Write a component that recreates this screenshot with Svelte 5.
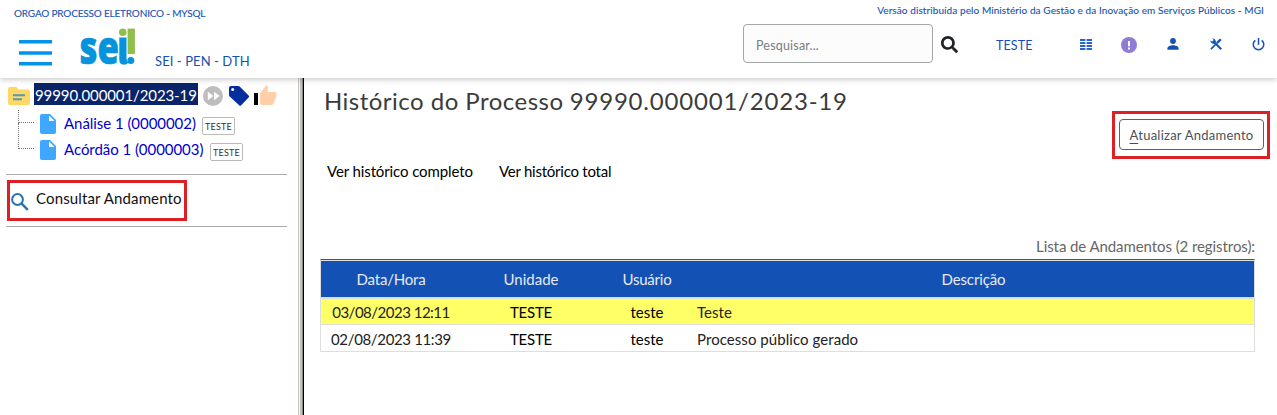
<script>
  const documents = [
    { name: 'Análise 1 (0000002)', unit: 'TESTE', width: 133 },
    { name: 'Acórdão 1 (0000003)', unit: 'TESTE', width: 141 }
  ];
  const rows = [
    { date: '03/08/2023 12:11', spacing: -0.5, unit: 'TESTE', user: 'teste', text: 'Teste', current: true },
    { date: '02/08/2023 11:39', spacing: -0.35, unit: 'TESTE', user: 'teste', text: 'Processo público gerado', current: false }
  ];
</script>

<div class="page">
  <header>
    <div class="brand">
      <div class="org">ORGAO PROCESSO ELETRONICO - MYSQL</div>
      <div class="brand-row">
        <svg class="menu" width="33" height="26" viewBox="0 0 33 26">
          <path d="M0 1.7h33M0 13h33M0 23.8h33" stroke="#0394e8" stroke-width="3.4" />
        </svg>
        <svg class="logo" width="56" height="38" viewBox="0 0 56 38">
          <text x="-0.5" y="35.800" font-family="Open Sans" font-weight="800" font-size="46" textLength="39.500" lengthAdjust="spacingAndGlyphs" fill="#0594dc" stroke="#0594dc" stroke-width="0.700">se</text>
          <path d="M39.3 9.5h7.2v20.8q0 2.6 1.8 4.5-1.5 2-4.4 2-4.6 0-4.6-5.2z" fill="#0594dc" />
          <circle cx="42.8" cy="4.3" r="3.8" fill="#8fbe4b" />
          <path d="M47.6.6h7.3v25.4h-7.3z" fill="#8fbe4b" />
          <circle cx="50.8" cy="32.4" r="3.5" fill="#0594dc" />
        </svg>
        <span class="system">SEI - PEN - DTH</span>
      </div>
    </div>
    <div class="tools">
      <div class="version">Versão distribuída pelo Ministério da Gestão e da Inovação em Serviços Públicos - MGI</div>
      <div class="tool-row">
        <div class="search">Pesquisar...</div>
        <svg class="lens" width="17" height="17" viewBox="0 0 512 512">
          <path fill="#1f2326" d="M505 442.700 405.300 343c-4.500-4.500-10.600-7-17-7H372c27.600-35.300 44-79.700 44-128C416 93.100 322.900 0 208 0S0 93.100 0 208s93.100 208 208 208c48.300 0 92.700-16.400 128-44v16.300c0 6.400 2.500 12.500 7 17l99.700 99.700c9.400 9.400 24.600 9.400 33.900 0l28.300-28.300c9.400-9.400 9.400-24.600.1-34zM208 336c-70.700 0-128-57.200-128-128 0-70.700 57.200-128 128-128 70.700 0 128 57.200 128 128 0 70.700-57.200 128-128 128z" />
        </svg>
        <span class="unit">TESTE</span>
        <svg class="grid-icon" width="12" height="11" viewBox="0 0 12 11">
          <path d="M0 1h5.400M6.600 1H12M0 4h5.400M6.600 4H12M0 7h5.400M6.600 7H12M0 10h5.400M6.600 10H12" stroke="#2a66c9" stroke-width="1.900" />
        </svg>
        <svg class="alert" width="16" height="16" viewBox="0 0 16 16">
          <circle cx="8" cy="8" r="8" fill="#8f7bd3" />
          <path d="M7 4h2v5.200H7zM7 10.400h2v2H7z" fill="#fff" />
        </svg>
        <svg class="user" width="12" height="12" viewBox="0 0 12 12">
          <circle cx="6" cy="3" r="2.900" fill="#1351b4" />
          <path d="M.4 11.800v-1.300C.4 8.500 3.500 7.300 6 7.300s5.600 1.200 5.600 3.200v1.300z" fill="#1351b4" />
        </svg>
        <svg class="wrench" width="12" height="12" viewBox="0 0 12 12">
          <path d="M3.300 3.300 11.200 11.200" stroke="#1351b4" stroke-width="2" />
          <path d="M2.200.5A3 3 0 0 1 5.600 4.400L4.400 5.600A3 3 0 0 1 .5 2.200L2.100 3.700 3.700 2.100z" fill="#1351b4" />
          <path d="M6.900 5.100 10.800 1.200" stroke="#1351b4" stroke-width="2.300" />
          <path d="M6 6 .9 11.100" stroke="#1351b4" stroke-width="1.700" />
        </svg>
        <svg class="power" width="13" height="13" viewBox="0 0 13 13">
          <path d="M6.500 0v6.800M3.300 2.300a5.300 5.300 0 1 0 6.400 0" fill="none" stroke="#1351b4" stroke-width="1.500" />
        </svg>
      </div>
    </div>
  </header>

  <div class="body">
    <aside>
      <div class="process">
        <svg width="22" height="18" viewBox="0 0 22 18">
          <path d="M2 0h6.500l2.200 2.500H20a2 2 0 0 1 2 2V16a2 2 0 0 1-2 2H2a2 2 0 0 1-2-2V2a2 2 0 0 1 2-2z" fill="#ffd764" />
          <path d="M5 8.300h12M5 12.200h9" stroke="#4d9cc0" stroke-width="2" />
        </svg>
        <span class="number">99990.000001/2023-19</span>
        <svg class="forward" width="20" height="20" viewBox="0 0 20 20">
          <circle cx="10" cy="10" r="10" fill="#bdbdbd" />
          <path d="M4.800 5.800v8.400l5.600-4.200zM11 5.800v8.400l5.700-4.200z" fill="#fff" />
        </svg>
        <svg class="tag" width="21" height="20" viewBox="0 0 21 20">
          <path d="M0 2a2 2 0 0 1 2-2h7.200q.8 0 1.400.6l9 8.900q1 1 0 2l-7.400 7.800q-1 1-2 0L.7 10.500Q0 9.800 0 9z" fill="#022e9f" />
          <circle cx="3.700" cy="3.500" r="1.500" fill="#fff" />
        </svg>
        <svg class="thumb" width="23" height="21" viewBox="0 0 23 21">
          <path d="M0 8h4v12H0z" fill="#000" />
          <path d="M6 8.200 12.500 0l1.200 1.200q.5.500.4 1.300L13.300 7H20.500q2 0 2 2v2l-3 7.400q-.6 1.600-2.200 1.600H8q-2 0-2-2z" fill="#ffd0a8" />
        </svg>
      </div>
      <div class="documents">
        {#each documents as doc}
          <div class="doc">
            <span class="branch"></span>
            <svg width="16" height="20" viewBox="0 0 16 20">
              <path d="M2 0h8l6 6v12a2 2 0 0 1-2 2H2a2 2 0 0 1-2-2V2a2 2 0 0 1 2-2z" fill="#3fa7ff" />
              <path d="M9 1.500V7h5.500z" fill="#fff" />
            </svg>
            <a href="#doc" style="width: {doc.width}px">{doc.name}</a>
            <span class="badge">{doc.unit}</span>
          </div>
        {/each}
      </div>
      <div class="consult-area">
        <div class="consult">
          <svg width="18" height="18" viewBox="0 0 18 18">
            <circle cx="6.500" cy="6.500" r="5.400" fill="none" stroke="#2b73b0" stroke-width="2" />
            <path d="M10.400 10.400 16.800 16.800" stroke="#2b73b0" stroke-width="2.500" />
          </svg>
          <span>Consultar Andamento</span>
        </div>
      </div>
    </aside>
    <div class="splitter"></div>
    <main>
      <h1><span>Histórico do Processo</span> <b>99990.000001/2023-19</b></h1>
      <div class="actions">
        <div class="mark"><button><u>A</u>tualizar Andamento</button></div>
      </div>
      <nav><span class="full">Ver histórico completo</span><span class="total">Ver histórico total</span></nav>
      <div class="caption">Lista de Andamentos (2 registros):</div>
      <div class="table">
        <div class="row head">
          <span class="h-date">Data/Hora</span><span>Unidade</span><span class="h-user">Usuário</span><span class="h-desc">Descrição</span>
        </div>
        {#each rows as row}
          <div class="row" class:current={row.current}>
            <span class="date" style="letter-spacing: {row.spacing}px">{row.date}</span>
            <span class="unit-cell">{row.unit}</span>
            <span class="user-cell">{row.user}</span>
            <span class="desc">{row.text}</span>
          </div>
        {/each}
      </div>
    </main>
  </div>
</div>

<style>
  :global(body) { margin: 0; background: #fff; }
  .page { height: 415px; overflow: hidden; display: flex; flex-direction: column; font: 15px/20px Lato, sans-serif; color: #222; white-space: nowrap; }
  svg { display: block; flex: none; }
  header { height: 78px; flex: none; display: flex; justify-content: space-between; color: #1351b4; background: #fff; box-shadow: 0 1px 6px rgba(0, 0, 0, 0.25); z-index: 1; box-sizing: border-box; }
  .org { margin: 7px 0 0 14px; font-size: 10px; line-height: 12px; letter-spacing: -0.18px; -webkit-text-stroke: 0.1px; }
  .brand-row { display: flex; padding-left: 19px; }
  .menu { margin-top: 21px; }
  .logo { margin: 9px 0 0 28px; overflow: visible; }
  .system { margin: 33px 0 0 19px; font-size: 13px; line-height: 19px; letter-spacing: 0.08px; }
  .tools { width: 534px; }
  .version { margin: 4px 13px 0 0; text-align: right; font-size: 10px; line-height: 12px; letter-spacing: 0.09px; -webkit-text-stroke: 0.1px; }
  .tool-row { display: flex; padding-top: 8px; }
  .search { width: 190px; height: 39px; box-sizing: border-box; border: 1px solid #a3a5a7; border-radius: 4px; background: #fcfcfc; padding: 11px 12px; font-size: 12.5px; line-height: 20px; letter-spacing: 0.19px; color: #777d82; }
  .lens { margin: 12px 0 0 8px; }
  .unit { margin: 12px 0 0 38px; width: 38px; font-size: 12.5px; line-height: 20px; letter-spacing: 0.1px; }
  .grid-icon { margin: 15px 0 0 46px; }
  .alert { margin: 13px 0 0 29px; }
  .user { margin: 14px 0 0 30px; }
  .wrench { margin: 14px 0 0 31px; }
  .power { margin: 14px 0 0 30px; }
  .body { flex: 1; display: flex; min-height: 0; }
  aside { width: 298px; flex: none; }
  .process { height: 22px; margin-top: 5px; padding-left: 8px; display: flex; align-items: center; }
  .process > svg:first-child { margin-top: 3px; }
  .number { width: 163px; height: 22px; margin-left: 4px; padding-left: 1px; background: #0a246a; color: #fff; line-height: 25px; letter-spacing: -0.1px; }
  .forward { margin: 4px 0 0 5px; }
  .tag { margin: 4px 0 0 6px; }
  .thumb { margin: 2px 0 0 4px; }
  .documents { margin-left: 18px; padding-top: 5px; }
  .doc { height: 26px; display: flex; align-items: flex-start; }
  .branch { width: 15px; height: 25px; margin-top: -13px; border-left: 1px dotted #777; border-bottom: 1px dotted #777; }
  .doc:first-child .branch { height: 12px; margin-top: 0; }
  .doc svg { margin: 4px 8px 0 6px; }
  .doc a { color: #0000cc; text-decoration: none; line-height: 26px; letter-spacing: -0.05px; }
  .badge { margin: 7px 0 0 5px; width: 31px; height: 16px; border: 1px solid #bbb; border-radius: 2px; font-size: 9px; line-height: 18px; letter-spacing: 0.22px; text-align: center; color: #333; }
  .consult-area { margin: 12px 11px 0 6px; height: 46px; border-top: 1px solid #aaa; border-bottom: 1px solid #aaa; padding: 5px 0 0 1px; }
  .consult { width: 180px; height: 41px; box-sizing: border-box; border: 3px solid #dd2025; display: flex; color: #111; }
  .consult svg { margin: 10px 0 0 1px; }
  .consult span { margin: 5px 0 0 7px; letter-spacing: 0.13px; }
  .splitter { width: 6px; flex: none; background: linear-gradient(90deg, #c8c6c0 1px, #f4f3f0 1px 2px, #c4c2bc 2px 4px, #8c8a86 4px 5px, #000 5px); }
  main { flex: 1; padding: 0 0 0 16px; }
  h1 { margin: 9px 0 0 4px; height: 24px; font-size: 24px; line-height: 28px; font-weight: 400; color: #3b3b3b; }
  h1 span { letter-spacing: 0.48px; }
  h1 b { font-weight: 400; letter-spacing: 0.8px; }
  .actions { display: flex; justify-content: flex-end; padding-right: 7px; }
  .mark { width: 158px; height: 48px; box-sizing: border-box; border: 3px solid #dd2025; padding: 5px 3px 0 4px; }
  button { display: block; width: 145px; height: 31px; padding: 0; background: #fff; border: 1px solid #5c6064; border-radius: 4px; font: 13px Lato, sans-serif; letter-spacing: 0.25px; color: #4b5157; }
  u { text-underline-offset: 3px; }
  nav { display: flex; margin: 2px 0 0 7px; color: #000; }
  .full { width: 172px; letter-spacing: -0.11px; }
  .total { letter-spacing: -0.24px; }
  .caption { margin: 55px 22px 0 0; text-align: right; letter-spacing: -0.08px; color: #666; }
  .table { margin-top: 3px; width: 935px; box-sizing: border-box; border: 1px solid #dedede; border-top: 1px solid #3d6b1f; }
  .row { height: 26px; display: grid; grid-template-columns: 140px 140px 94px 1fr; text-align: center; line-height: 29px; border-top: 1px solid #dedede; color: #000; }
  .head { height: 36px; background: #1351b4; color: #e8eaf0; line-height: 36px; border-bottom: 1px solid #dedede; }
  .current { height: 25px; background: #ffff66; line-height: 27px; }
  .h-date { letter-spacing: -0.19px; }
  .h-user { letter-spacing: -0.22px; }
  .h-desc { letter-spacing: -0.12px; }
  .date { color: #222; }
  .unit-cell { letter-spacing: -0.24px; }
  .user-cell { padding-right: 2px; }
  .h-user { padding-right: 2px; }
  .h-desc { padding-right: 2px; }
  .desc { text-align: left; padding-left: 2px; color: #222; letter-spacing: 0.06px; }
</style>
